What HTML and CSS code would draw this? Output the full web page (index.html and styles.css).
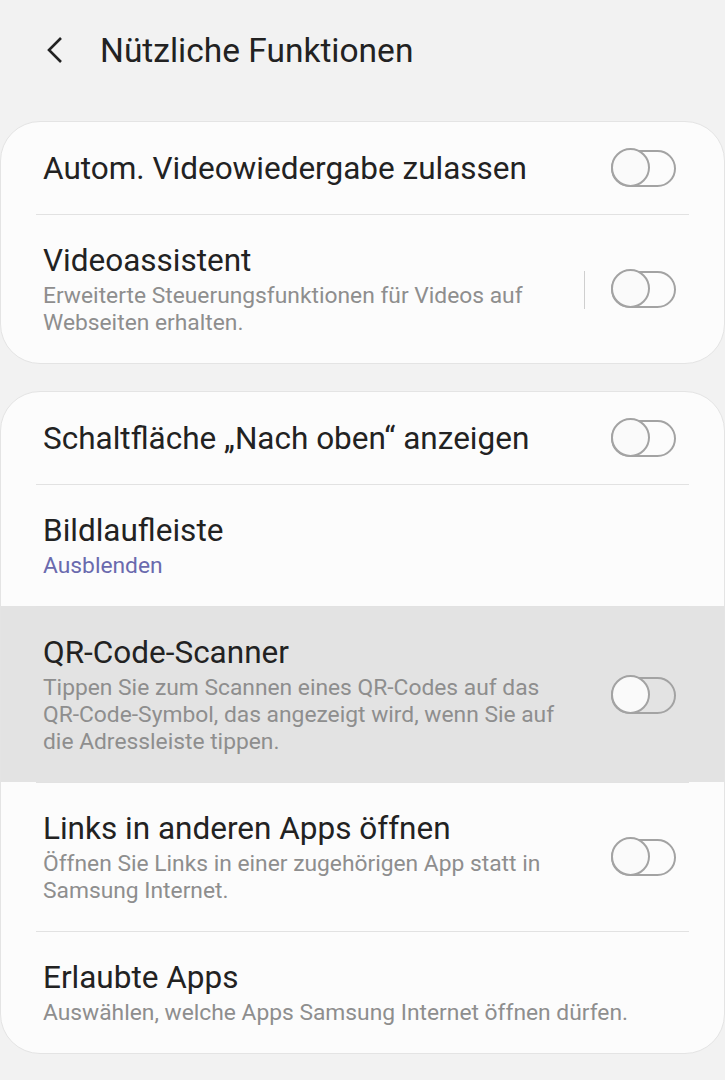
FILE: index.html
```html
<!DOCTYPE html>
<html lang="de">
  <head>
    <meta charset="UTF-8" />
    <meta name="viewport" content="width=device-width, initial-scale=1.0" />
    <title>Nützliche Funktionen</title>
    <link rel="stylesheet" href="styles.css">
  </head>

  <body>
    <!-- Top bar -->
    <div class="topbar">
      <button class="back-button" aria-label="Zurück">
        <svg width="24" height="28" viewBox="0 0 24 28">
          <path d="M17 2 L5 14 L17 26" fill="none" stroke="#222" stroke-width="2.6" />
        </svg>
      </button>
      <h1>Nützliche Funktionen</h1>
    </div>

    <!-- First group -->
    <div class="card">
      <div class="row">
        <div class="row-inner">
          <div class="row-text">
            <div class="row-title">Autom. Videowiedergabe zulassen</div>
          </div>
          <span class="switch"></span>
        </div>
      </div>
      <div class="row">
        <div class="row-inner">
          <div class="row-text">
            <div class="row-title">Videoassistent</div>
            <div class="row-desc">Erweiterte Steuerungsfunktionen für Videos auf Webseiten erhalten.</div>
          </div>
          <span class="v-sep"></span>
          <span class="switch"></span>
        </div>
      </div>
    </div>

    <!-- Second group -->
    <div class="card">
      <div class="row">
        <div class="row-inner">
          <div class="row-text">
            <div class="row-title">Schaltfläche „Nach oben“ anzeigen</div>
          </div>
          <span class="switch"></span>
        </div>
      </div>
      <div class="row">
        <div class="row-inner">
          <div class="row-text">
            <div class="row-title">Bildlaufleiste</div>
            <div class="row-desc row-value">Ausblenden</div>
          </div>
        </div>
      </div>
      <div class="row row-pressed">
        <div class="row-inner">
          <div class="row-text">
            <div class="row-title">QR-Code-Scanner</div>
            <div class="row-desc">Tippen Sie zum Scannen eines QR-Codes auf das QR-Code-Symbol, das angezeigt wird, wenn Sie auf die Adressleiste tippen.</div>
          </div>
          <span class="switch"></span>
        </div>
      </div>
      <div class="row">
        <div class="row-inner">
          <div class="row-text">
            <div class="row-title">Links in anderen Apps öffnen</div>
            <div class="row-desc">Öffnen Sie Links in einer zugehörigen App statt in Samsung Internet.</div>
          </div>
          <span class="switch"></span>
        </div>
      </div>
      <div class="row">
        <div class="row-inner">
          <div class="row-text">
            <div class="row-title">Erlaubte Apps</div>
            <div class="row-desc">Auswählen, welche Apps Samsung Internet öffnen dürfen.</div>
          </div>
        </div>
      </div>
    </div>
  </body>
</html>
```

FILE: styles.css
```css
body {
  margin: 0;
  background-color: #f2f2f2;
  font-family: Roboto, "Noto Sans", sans-serif;
  color: #1f1f1f;
}

.topbar {
  display: flex;
  align-items: center;
  height: 100px;
  padding: 0 0 0 44px;
  margin-bottom: 21px;
}

.back-button {
  display: flex;
  padding: 0;
  border: none;
  background: none;
  margin-right: 32px;
}

.topbar h1 {
  margin: 0;
  font-size: 33.5px;
  font-weight: 400;
  color: #222;
}

.card {
  background-color: #fcfcfc;
  border: 1px solid #e4e4e4;
  border-radius: 40px;
  margin-bottom: 27px;
  overflow: hidden;
}

.row {
  padding: 0 35px;
}

.row + .row .row-inner {
  border-top: 1px solid #e2e2e2;
}

.row-pressed {
  background-color: #e3e3e3;
}

.row-inner {
  display: flex;
  align-items: center;
  padding: 28px 13px 27px 7px;
}

.row-text {
  flex: 1;
  padding-right: 36px;
}

.row-title {
  font-size: 31.5px;
  line-height: 36px;
  color: #222;
}

.row-desc {
  margin-top: 3px;
  font-size: 22.8px;
  line-height: 27px;
  color: #8e8e8e;
}

.row-value {
  color: #6a6aae;
}

.v-sep {
  width: 1px;
  height: 38px;
  background-color: #cfcfcf;
  margin-right: 26px;
}

.switch {
  position: relative;
  width: 61px;
  height: 33px;
  border: 2px solid #a3a3a3;
  border-radius: 20px;
  flex-shrink: 0;
}

/* knob sits over the left end of the track */
.switch::after {
  content: "";
  position: absolute;
  left: -2px;
  top: -4px;
  width: 35px;
  height: 35px;
  border: 2px solid #a3a3a3;
  border-radius: 50%;
  background-color: #fafafa;
}
```
